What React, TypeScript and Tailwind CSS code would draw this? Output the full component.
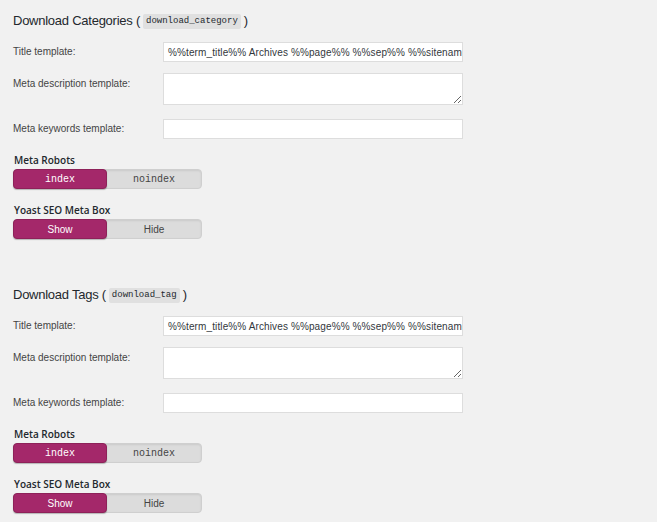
import React from "react";

const sans = { fontFamily: '"Liberation Sans", Arial, sans-serif' };

function Toggle({ left, right, mono }: { left: string; right: string; mono?: boolean }) {
  const f = mono ? "font-['Liberation_Mono',monospace]" : "font-['Liberation_Sans',Arial,sans-serif]";
  return (
    <div className="mt-[2px] flex h-[20px] w-[189px] rounded-[4px] border border-[#cfcfcf] bg-[#dcdcdc] shadow-[inset_0_1px_2px_rgba(0,0,0,0.08)]">
      <div
        className={`-my-px -ml-px flex h-[20px] w-[94px] items-center justify-center rounded-[4px] border border-[#8e2159] bg-[#a4286a] text-[10px] text-white shadow-[0_1px_1px_rgba(0,0,0,0.25)] ${f}`}
      >
        {left}
      </div>
      <div className={`flex flex-1 items-center justify-center text-[10px] text-[#444] ${f}`}>{right}</div>
    </div>
  );
}

function Section({ title, code, first }: { title: string; code: string; first?: boolean }) {
  return (
    <div className={first ? "pt-[11px]" : "pt-[46px]"}>
      <h2 className="flex h-[20px] items-center text-[13px] leading-[20px] tracking-[-0.25px] text-[#23282d]" style={sans}>
        <span>{title} (</span>
        <span className="mx-[3px] rounded-[2px] bg-[#e0e0e0] px-[3px] py-[1px] font-['Liberation_Mono',monospace] text-[9px] leading-[13px] tracking-normal text-[#23282d]">
          {code}
        </span>
        <span>)</span>
      </h2>
      <div className="mt-[11px] flex">
        <div className="w-[150px] text-[10px] leading-[20px] text-[#444]" style={sans}>
          Title template:
        </div>
        <div className="flex h-[20px] w-[300px] items-center overflow-hidden whitespace-nowrap border border-[#ddd] bg-white pl-[4px] text-[10px] tracking-[0.12px] text-[#32373c]" style={sans}>
          %%term_title%% Archives %%page%% %%sep%% %%sitename%%
        </div>
      </div>
      <div className="mt-[11px] flex">
        <div className="w-[150px] pt-px text-[10px] leading-[20px] text-[#444]" style={sans}>
          Meta description template:
        </div>
        <textarea className="block h-[32px] w-[300px] border border-[#ddd] bg-white outline-none" />
      </div>
      <div className="mt-[14px] flex">
        <div className="w-[150px] text-[10px] leading-[20px] text-[#444]" style={sans}>
          Meta keywords template:
        </div>
        <div className="h-[20px] w-[300px] border border-[#ddd] bg-white" />
      </div>
      <div className="mt-[14px] pl-px font-['Open_Sans',sans-serif] text-[10px] font-semibold leading-[14px] text-[#23282d]">
        Meta Robots
      </div>
      <Toggle left="index" right="noindex" mono />
      <div className="mt-[14px] pl-px font-['Open_Sans',sans-serif] text-[10px] font-semibold leading-[14px] text-[#23282d]">
        Yoast SEO Meta Box
      </div>
      <Toggle left="Show" right="Hide" />
    </div>
  );
}

export default function App() {
  return (
    <div className="h-[522px] w-[657px] overflow-hidden bg-[#f1f1f1] pl-[13px]">
      <Section title="Download Categories" code="download_category" first />
      <Section title="Download Tags" code="download_tag" />
    </div>
  );
}
